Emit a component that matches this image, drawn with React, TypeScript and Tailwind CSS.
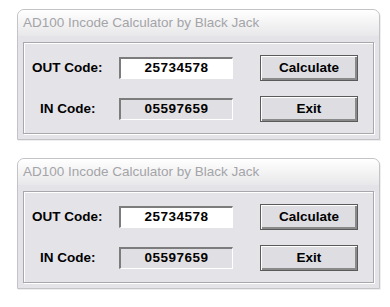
import React from 'react';

const font = { fontFamily: '"Liberation Sans", Arial, sans-serif' };

function Field({ value, readOnly }: { value: string; readOnly?: boolean }) {
  return (
    <div
      className={[
        'w-[114px] h-[22px] border-t-2 border-l-2 border-t-[#7c7c7c] border-l-[#7c7c7c] border-b border-r border-b-white border-r-white',
        'flex items-center justify-center text-[13.5px] font-bold text-black tracking-[0.5px]',
        readOnly ? 'bg-[#e0e0e4]' : 'bg-white',
      ].join(' ')}
    >
      {value}
    </div>
  );
}

function Btn({ label }: { label: string }) {
  return (
    <div className="w-[98px] h-[26px] border border-[#5a5a5a] bg-[#dedee2] shadow-[inset_1px_1px_0_#ffffff,inset_-2px_-2px_0_#8a8a8a] flex items-center justify-center text-[13.5px] font-bold text-black">
      {label}
    </div>
  );
}

function CalcWindow() {
  return (
    <div className="ml-[17px] w-[363px] border border-[#c4c4c8] rounded-t-[7px] bg-[#e4e4e8] shadow-[1px_1px_0_#eeeeee]">
      <div className="h-[26px] rounded-t-[6px] bg-gradient-to-b from-[#ffffff] to-[#e8e8ea] flex items-center pl-[5px] text-[13.5px] text-[#a4a4a8]">
        AD100 Incode Calculator by Black Jack
      </div>
      <div className="px-[5px] pt-[6px] pb-[5px]">
        <div className="border border-[#a8a8ac] shadow-[inset_1px_1px_0_#ffffff,1px_1px_0_#ffffff] pl-[8px] pr-[15px] pt-[12px] pb-[11px]">
          <div className="flex items-center">
            <div className="w-[87px] text-[13.5px] font-bold text-black">OUT Code:</div>
            <Field value="25734578" />
            <div className="ml-auto">
              <Btn label="Calculate" />
            </div>
          </div>
          <div className="flex items-center mt-[15px]">
            <div className="w-[87px] pl-[8px] text-[13.5px] font-bold text-black">IN Code:</div>
            <Field value="05597659" readOnly />
            <div className="ml-auto">
              <Btn label="Exit" />
            </div>
          </div>
        </div>
      </div>
    </div>
  );
}

export default function App() {
  return (
    <div className="w-[390px] h-[307px] bg-white overflow-hidden" style={font}>
      <div className="pt-[9px]">
        <CalcWindow />
      </div>
      <div className="pt-[18px]">
        <CalcWindow />
      </div>
    </div>
  );
}
